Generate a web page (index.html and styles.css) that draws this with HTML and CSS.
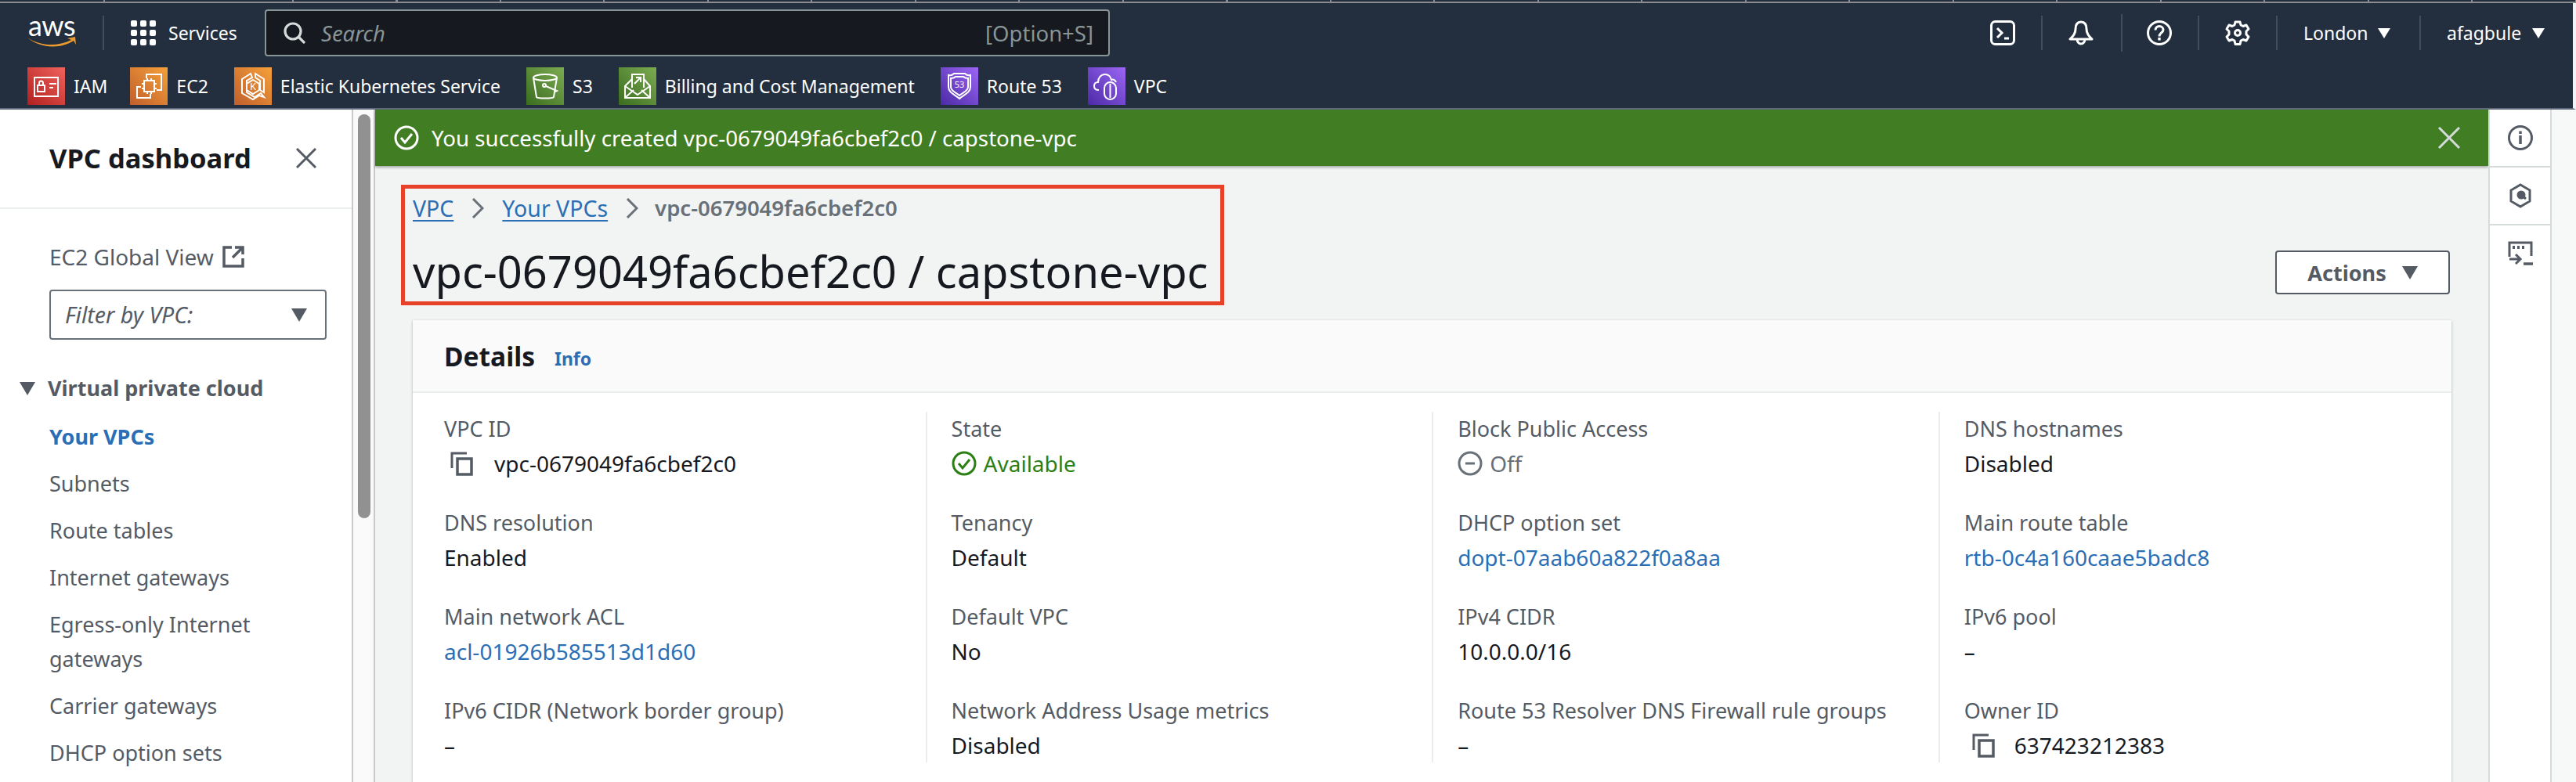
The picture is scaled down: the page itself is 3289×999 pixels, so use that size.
FILE: index.html
```html
<!DOCTYPE html>
<html lang="en">
<head>
  <meta charset="UTF-8">
  <title>vpc-0679049fa6cbef2c0 / capstone-vpc | VPC Console</title>
  <link rel="stylesheet" href="styles.css">
</head>
<body>
  <svg class="defs" width="0" height="0">
    <symbol id="copy" viewBox="0 0 32 32">
      <path d="M3 22V3h19" fill="none" stroke="currentColor" stroke-width="3"/>
      <rect x="10" y="10" width="18" height="20" fill="none" stroke="currentColor" stroke-width="3.5"/>
    </symbol>
  </svg>

  <div class="strip"><div class="strip-ticks"></div></div>
  <header class="header">
    <div class="nav-top">
      <div class="logo">
        <span class="logo-text">aws</span>
        <svg class="logo-smile" width="64" height="15" viewBox="0 0 64 15"><path d="M0 2c16 11 38 12 56 3l-5-2 10-2 1 10-3-5C42 17 16 16 0 2z" fill="#ec9a2e"/></svg>
      </div>
      <div class="services">
        <svg width="32" height="32" viewBox="0 0 32 32" fill="#fff">
          <rect width="8" height="8" rx="2"/><rect x="12" width="8" height="8" rx="2"/><rect x="24" width="8" height="8" rx="2"/>
          <rect y="12" width="8" height="8" rx="2"/><rect x="12" y="12" width="8" height="8" rx="2"/><rect x="24" y="12" width="8" height="8" rx="2"/>
          <rect y="24" width="8" height="8" rx="2"/><rect x="12" y="24" width="8" height="8" rx="2"/><rect x="24" y="24" width="8" height="8" rx="2"/>
        </svg>
        <span>Services</span>
      </div>
      <div class="search">
        <svg width="28" height="28" viewBox="0 0 28 28" fill="none" stroke="#d5dbdb" stroke-width="3.2"><circle cx="12" cy="12" r="10"/><path d="M19 19l8 8"/></svg>
        <span class="search-text">Search</span>
        <span class="search-key">[Option+S]</span>
      </div>
      <div class="nav-right">
        <div class="nav-cell nav-first">
          <svg width="32" height="32" viewBox="0 0 32 32" fill="none" stroke="#fff" stroke-width="3"><rect x="1.5" y="1.5" width="29" height="29" rx="5"/><path d="M9 10l6 6-6 6"/><path d="M18 23h6"/></svg>
        </div>
        <div class="nav-cell nav-bell">
          <svg width="32" height="32" viewBox="0 0 32 32" fill="none" stroke="#fff" stroke-width="3"><path d="M16 2c-5 0-7 4-7 9 0 6-3 9-7 13h28c-4-4-7-7-7-13 0-5-2-9-7-9z" stroke-linejoin="round"/><path d="M11 24a5 6 0 0 0 10 0"/></svg>
        </div>
        <div class="nav-cell nav-narrow">
          <svg width="32" height="32" viewBox="0 0 32 32" fill="none" stroke="#fff" stroke-width="3"><circle cx="16" cy="16" r="14.5"/><path d="M11 12.5c0-3 2.300-5 5-5s5 2 5 4.500c0 4-5 4-5 8.500"/><path d="M16 22v3.500" stroke-width="3.400"/></svg>
        </div>
        <div class="nav-cell">
          <svg width="32" height="32" viewBox="0 0 32 32" fill="none" stroke="#fff" stroke-width="3" stroke-linejoin="round"><path d="M13 2h6l1 4 3 1.500 4-1.500 3 5-3 3v4l3 3-3 5-4-1.500-3 1.500-1 4.500h-6l-1-4.500-3-1.500-4 1.500-3-5 3-3v-4l-3-3 3-5 4 1.500 3-1.500z"/><circle cx="16" cy="16" r="3.500"/></svg>
        </div>
        <div class="nav-cell nav-text"><span class="nav-region">London</span><i class="caret caret-light"></i></div>
        <div class="nav-cell nav-text nav-last"><span class="nav-user">afagbule</span><i class="caret caret-light"></i></div>
      </div>
    </div>
    <div class="nav-shortcuts">
      <a class="shortcut shortcut-iam">
        <svg class="tile tile-red" viewBox="0 0 48 48" fill="none" stroke="#fff" stroke-width="2"><rect x="9" y="13" width="30" height="24"/><rect x="13" y="23" width="9" height="8"/><path d="M15 23v-3a2.500 2.500 0 0 1 5 0v3"/><path d="M28 21h9M28 26h5"/></svg>
        <span>IAM</span>
      </a>
      <a class="shortcut">
        <svg class="tile tile-orange" viewBox="0 0 48 48" fill="none" stroke="#fff" stroke-width="2"><path d="M21 14V9h19v20h-6M14 25H9v14h17v-5"/><rect x="18" y="17" width="13" height="14"/><path d="M15 21h3M15 27h3M31 21h3M31 27h3M22 14v3M27 14v3M22 31v3M27 31v3"/></svg>
        <span>EC2</span>
      </a>
      <a class="shortcut">
        <svg class="tile tile-orange" viewBox="0 0 48 48" fill="none" stroke="#fff" stroke-width="2"><path d="M21 8l-11 7v18l14 8 8-5 6 2-4-5-8 5-10-6V17l7-4z"/><path d="M27 8l11 7v17l-5-3V17l-6-4z"/><path d="M24 16l8 5v8l-8 5-8-5v-8z"/><text class="tile-glyph" x="24" y="29" text-anchor="middle">K</text></svg>
        <span>Elastic Kubernetes Service</span>
      </a>
      <a class="shortcut">
        <svg class="tile tile-green" viewBox="0 0 48 48" fill="none" stroke="#fff" stroke-width="2"><ellipse cx="24" cy="13" rx="15" ry="4"/><path d="M9 13l4 25c1 2 21 2 22 0l4-25"/><circle cx="23" cy="23" r="2"/><path d="M25 24l14 6-2 1"/></svg>
        <span>S3</span>
      </a>
      <a class="shortcut">
        <svg class="tile tile-green" viewBox="0 0 48 48" fill="none" stroke="#fff" stroke-width="2"><path d="M17 26V9h15v17"/><path d="M20 21l8-8M22 13h6v6"/><path d="M17 15l-9 9v15h32V24l-8-9"/><path d="M8 24l16 11 16-11M8 39l11-10M40 39L29 29"/></svg>
        <span>Billing and Cost Management</span>
      </a>
      <a class="shortcut">
        <svg class="tile tile-purple" viewBox="0 0 48 48" fill="none" stroke="#fff" stroke-width="2"><path d="M10 10c3 1 5 0 7-2h14c2 2 4 3 7 2v15c0 8-9 10-14 15-5-5-14-7-14-15z"/><path d="M13 14c2 0 4 0 6-2h10c2 2 4 2 6 2v11c0 6-7 7-11 11-4-4-11-5-11-11z"/><text class="tile-glyph tile-glyph-sm" x="24" y="26" text-anchor="middle">53</text></svg>
        <span>Route 53</span>
      </a>
      <a class="shortcut">
        <svg class="tile tile-purple" viewBox="0 0 48 48" fill="none" stroke="#fff" stroke-width="2"><path d="M14 29c-4 0-6-2-6-5s2-5 5-5c0-6 4-10 9-10 4 0 7 3 8 7 2-1 5 0 6 3"/><rect x="21" y="19" width="15" height="22" rx="7.500"/><path d="M28.500 21v18"/></svg>
        <span>VPC</span>
      </a>
    </div>
  </header>

  <div class="app">
    <aside class="sidebar">
      <div class="side-head">
        <h2>VPC dashboard</h2>
        <svg width="26" height="26" viewBox="0 0 26 26" stroke="#545b64" stroke-width="3"><path d="M1 1l24 24M25 1L1 25"/></svg>
      </div>
      <div class="side-body">
        <div class="global-view">
          <span>EC2 Global View</span>
          <svg width="28" height="28" viewBox="0 0 28 28" fill="none" stroke="#545b64" stroke-width="3.500"><path d="M12 2H2v24h24V16"/><path d="M13 15L25 3M16 2h10v9"/></svg>
        </div>
        <div class="filter">
          <span>Filter by VPC:</span>
          <i class="caret caret-dark"></i>
        </div>
        <div class="side-section">
          <i class="caret caret-dark"></i>
          <span>Virtual private cloud</span>
        </div>
        <ul class="side-list">
          <li class="active">Your VPCs</li>
          <li>Subnets</li>
          <li>Route tables</li>
          <li>Internet gateways</li>
          <li>Egress-only Internet gateways</li>
          <li>Carrier gateways</li>
          <li>DHCP option sets</li>
        </ul>
      </div>
    </aside>
    <div class="scrollbar"><div class="scrollbar-thumb"></div></div>

    <main class="main">
      <div class="flash">
        <svg width="32" height="32" viewBox="0 0 32 32" fill="none" stroke="#fff" stroke-width="3"><circle cx="16" cy="16" r="14"/><path d="M9 16l5 6 9-11"/></svg>
        <span class="flash-text">You successfully created vpc-0679049fa6cbef2c0 / capstone-vpc</span>
        <svg class="flash-close" width="28" height="28" viewBox="0 0 28 28" stroke="#d5dbdb" stroke-width="3"><path d="M1 1l26 26M27 1L1 27"/></svg>
      </div>

      <div class="page-head">
        <div class="marked">
          <nav class="crumbs">
            <a href="#">VPC</a>
            <svg width="16" height="26" viewBox="0 0 16 26" fill="none" stroke="#687078" stroke-width="3"><path d="M2 1l12 12L2 25"/></svg>
            <a href="#">Your VPCs</a>
            <svg width="16" height="26" viewBox="0 0 16 26" fill="none" stroke="#687078" stroke-width="3"><path d="M2 1l12 12L2 25"/></svg>
            <span class="crumb-current">vpc-0679049fa6cbef2c0</span>
          </nav>
          <h1>vpc-0679049fa6cbef2c0 / capstone-vpc</h1>
        </div>
        <button class="actions">Actions<i class="caret caret-dark"></i></button>
      </div>

      <section class="card">
        <div class="card-head">
          <h2>Details</h2>
          <a href="#">Info</a>
        </div>
        <div class="card-body">
          <div class="col">
            <div class="field">
              <div class="label">VPC ID</div>
              <div class="value value-copy"><svg class="copy-icon"><use href="#copy"/></svg>vpc-0679049fa6cbef2c0</div>
            </div>
            <div class="field">
              <div class="label">DNS resolution</div>
              <div class="value">Enabled</div>
            </div>
            <div class="field">
              <div class="label">Main network ACL</div>
              <div class="value"><a href="#">acl-01926b585513d1d60</a></div>
            </div>
            <div class="field">
              <div class="label">IPv6 CIDR (Network border group)</div>
              <div class="value">–</div>
            </div>
          </div>
          <div class="col">
            <div class="field">
              <div class="label">State</div>
              <div class="value value-ok">
                <svg width="32" height="32" viewBox="0 0 32 32" fill="none" stroke="currentColor" stroke-width="3"><circle cx="16" cy="16" r="14"/><path d="M9 16l5 6 9-11"/></svg>
                Available
              </div>
            </div>
            <div class="field">
              <div class="label">Tenancy</div>
              <div class="value">Default</div>
            </div>
            <div class="field">
              <div class="label">Default VPC</div>
              <div class="value">No</div>
            </div>
            <div class="field">
              <div class="label">Network Address Usage metrics</div>
              <div class="value">Disabled</div>
            </div>
          </div>
          <div class="col">
            <div class="field">
              <div class="label">Block Public Access</div>
              <div class="value value-off">
                <svg width="32" height="32" viewBox="0 0 32 32" fill="none" stroke="currentColor" stroke-width="3"><circle cx="16" cy="16" r="14"/><path d="M10 16h12"/></svg>
                Off
              </div>
            </div>
            <div class="field">
              <div class="label">DHCP option set</div>
              <div class="value"><a href="#">dopt-07aab60a822f0a8aa</a></div>
            </div>
            <div class="field">
              <div class="label">IPv4 CIDR</div>
              <div class="value">10.0.0.0/16</div>
            </div>
            <div class="field">
              <div class="label">Route 53 Resolver DNS Firewall rule groups</div>
              <div class="value">–</div>
            </div>
          </div>
          <div class="col">
            <div class="field">
              <div class="label">DNS hostnames</div>
              <div class="value">Disabled</div>
            </div>
            <div class="field">
              <div class="label">Main route table</div>
              <div class="value"><a href="#">rtb-0c4a160caae5badc8</a></div>
            </div>
            <div class="field">
              <div class="label">IPv6 pool</div>
              <div class="value">–</div>
            </div>
            <div class="field">
              <div class="label">Owner ID</div>
              <div class="value value-copy value-copy-tight"><svg class="copy-icon"><use href="#copy"/></svg>637423212383</div>
            </div>
          </div>
        </div>
      </section>
    </main>

    <aside class="rail">
      <div class="rail-item">
        <svg width="32" height="32" viewBox="0 0 32 32" fill="none" stroke="#545b64" stroke-width="3"><circle cx="16" cy="16" r="14.500"/><path d="M16 13v11" stroke-width="3.500"/><path d="M16 7.500v3.500" stroke-width="3.500"/></svg>
      </div>
      <div class="rail-item">
        <svg width="28" height="32" viewBox="0 0 28 32" fill="none" stroke="#545b64" stroke-width="3"><path d="M14 2l12 7v14l-12 7-12-7V9z"/><circle cx="15" cy="15" r="4" fill="#545b64"/><path d="M15 15l6 5"/></svg>
      </div>
      <div class="rail-item">
        <svg width="32" height="32" viewBox="0 0 32 32" fill="none" stroke="#545b64" stroke-width="3"><path d="M30 19V2H2v18"/><path d="M6 8h3M12 8h3M18 8h3" stroke-width="4"/><path d="M2 23h13M10 17l6 6-6 6"/><path d="M20 29h12" stroke-width="3.500"/></svg>
      </div>
    </aside>
  </div>
</body>
</html>
```
FILE: styles.css
```css
* {
  box-sizing: border-box;
}
html, body {
  margin: 0;
  height: 100%;
  overflow: hidden;
}
body {
  font-family: "Noto Sans", "Open Sans", sans-serif;
  background: #f2f3f3;
  color: #16191f;
}
a {
  color: #2a6eb5;
  text-decoration: none;
}
h1, h2, ul {
  margin: 0;
  padding: 0;
}
.defs {
  display: block;
  height: 0;
}

/* screen capture edge above the console */
.strip {
  height: 4px;
  background: #232f3e linear-gradient(#8a8d8f, #8a8d8f) 132px 0 / 2px 2px no-repeat;
  border-bottom: 2px solid #8a8d8f;
}
.strip-ticks {
  height: 2px;
  margin-left: 373px;
  background: repeating-linear-gradient(90deg, #8a8d8f 0 2px, transparent 2px 132.5px);
}

/* top nav */
.header {
  background: #232f3e;
  color: #fff;
  height: 136px;
  border-bottom: 2px solid #5f6b7a;
  border-right: 4px solid #f2f3f3;
}
.nav-top {
  display: flex;
  align-items: center;
  height: 76px;
  padding-left: 35px;
}
.logo {
  display: flex;
  flex-direction: column;
  width: 98px;
  height: 44px;
  border-right: 2px solid #414d5c;
}
.logo-text {
  font-family: "Lato", sans-serif;
  font-size: 36px;
  line-height: 24px;
  letter-spacing: -0.5px;
  padding-left: 1px;
}
.logo-smile {
  margin-top: 2px;
}
.services {
  display: flex;
  align-items: center;
  gap: 16px;
  margin-left: 34px;
  font-size: 23px;
  width: 171px;
}
.search {
  display: flex;
  align-items: center;
  width: 1079px;
  height: 60px;
  padding: 0 19px 0 22px;
  background: #16191f;
  border: 2px solid #879596;
  border-radius: 4px;
  font-size: 27.5px;
  color: #879596;
}
.search-text {
  margin-left: 20px;
  font-style: italic;
}
.search-key {
  margin-left: auto;
}
.nav-right {
  display: flex;
  align-items: center;
  margin-left: auto;
  padding-right: 36px;
}
.nav-cell {
  display: flex;
  align-items: center;
  height: 44px;
  padding: 0 33px;
  border-left: 2px solid #414d5c;
}
.nav-first {
  padding-left: 0;
  border-left: 0;
}
.nav-bell {
  padding-right: 35px;
}
.nav-narrow {
  height: 48px;
  padding-left: 31px;
}
.nav-text {
  gap: 12px;
  font-size: 23px;
  padding-right: 37px;
}
.nav-region {
  width: 83px;
}
.nav-user {
  width: 96px;
  margin-right: 1px;
}
.nav-last {
  padding-right: 0;
}
.nav-shortcuts {
  display: flex;
  padding: 6px 0 0 35px;
  gap: 33px;
}
.shortcut {
  display: flex;
  align-items: center;
  gap: 11px;
  font-size: 23px;
  color: #fff;
}
.shortcut-iam {
  margin-right: -4px;
}
.tile {
  width: 48px;
  height: 48px;
  flex: none;
}
.tile-red {
  background: linear-gradient(45deg, #b0201f, #f0625c);
}
.tile-orange {
  background: linear-gradient(45deg, #c05f2c, #f5a03a);
}
.tile-green {
  background: linear-gradient(45deg, #3b6d20, #7cab50);
}
.tile-purple {
  background: linear-gradient(45deg, #4b2aa5, #9c66f5);
}
.tile-glyph {
  fill: #fff;
  stroke: none;
  font-size: 13px;
}
.tile-glyph-sm {
  font-size: 11px;
}

/* carets */
.caret {
  display: inline-block;
  width: 0;
  height: 0;
  border-style: solid;
  border-color: transparent;
  border-width: 17px 10px 0;
  border-top-color: #545b64;
}
.caret-light {
  border-width: 13px 8px 0;
  border-top-color: #fff;
}

/* layout */
.app {
  display: flex;
  height: 859px;
}
.sidebar {
  width: 451px;
  flex: none;
  background: #fff;
  border-right: 2px solid #c9c9c9;
}
.side-head {
  display: flex;
  align-items: center;
  justify-content: space-between;
  height: 127px;
  padding: 0 45px 2px 63px;
  border-bottom: 2px solid #eaeded;
}
.side-head h2 {
  font-size: 34.5px;
  font-weight: 700;
  line-height: 44px;
}
.side-body {
  padding: 39px 0 0 63px;
  font-size: 27px;
  line-height: 44px;
  color: #545b64;
}
.global-view {
  display: flex;
  align-items: center;
  gap: 11px;
  font-size: 28px;
}
.filter {
  display: flex;
  align-items: center;
  justify-content: space-between;
  width: 354px;
  height: 64px;
  margin-top: 20px;
  padding: 0 23px 0 18px;
  border: 2px solid #687078;
  border-radius: 4px;
  font-size: 28.5px;
  font-style: italic;
}
.side-section {
  display: flex;
  align-items: center;
  gap: 16px;
  margin: 40px 0 18px -38px;
  font-weight: 700;
}
.side-list {
  list-style: none;
  padding-right: 45px;
}
.side-list li {
  margin-bottom: 16px;
}
.side-list .active {
  color: #2a6eb5;
  font-weight: 700;
}
.scrollbar {
  width: 28px;
  flex: none;
  padding: 6px 4px 0 6px;
  background: #fafafa;
  border-right: 2px solid #c9c9c9;
}
.scrollbar-thumb {
  height: 516px;
  border-radius: 8px;
  background: #919191;
}

.main {
  flex: 1;
  min-width: 0;
}
.flash {
  display: flex;
  align-items: center;
  height: 72px;
  padding: 0 36px 0 24px;
  background: #417e23;
  box-shadow: 0 2px 3px rgba(0, 0, 0, 0.3);
  color: #fff;
  font-size: 27.7px;
}
.flash-text {
  margin-left: 16px;
}
.flash-close {
  margin-left: auto;
}
.page-head {
  display: flex;
  align-items: flex-end;
  justify-content: space-between;
  margin: 24px 49px 0 33px;
}
.marked {
  width: 1051px;
  height: 154px;
  padding: 3px 0 0 10px;
  border: 5px solid #e8412a;
}
.crumbs {
  display: flex;
  align-items: center;
  gap: 23px;
  font-size: 28.5px;
  line-height: 44px;
  color: #687078;
}
.crumbs a {
  text-decoration: underline;
  text-underline-offset: 4px;
}
.crumb-current {
  font-size: 27.5px;
  font-weight: 600;
  margin-left: -2px;
}
.marked h1 {
  margin-top: 26px;
  font-size: 56px;
  font-weight: 400;
  line-height: 64px;
  white-space: nowrap;
}
.actions {
  display: flex;
  align-items: center;
  justify-content: center;
  gap: 20px;
  width: 223px;
  height: 56px;
  margin-bottom: 14px;
  background: #fff;
  border: 2px solid #545b64;
  border-radius: 4px;
  color: #545b64;
  font: 700 27px "Noto Sans", sans-serif;
}
.card {
  margin: 19px 47px 0 48px;
  background: #fff;
  box-shadow: 0 1px 3px rgba(0, 21, 41, 0.3);
}
.card-head {
  display: flex;
  align-items: center;
  gap: 25px;
  height: 93px;
  padding: 0 0 0 40px;
  background: #fafafa;
  border-bottom: 2px solid #eaeded;
}
.card-head h2 {
  font-size: 33.5px;
  font-weight: 700;
}
.card-head a {
  font-size: 23px;
  font-weight: 700;
  padding-top: 6px;
}
.card-body {
  display: grid;
  grid-template-columns: repeat(4, 646.6px);
  padding: 24px 0 30px 8px;
}
.col {
  padding-left: 31px;
  border-left: 2px solid #eaeded;
}
.col:first-child {
  padding-left: 32px;
  border-left: 0;
}
.field {
  height: 120px;
  line-height: 44px;
}
.field:last-child {
  height: 88px;
}
.label {
  font-size: 27px;
  color: #545b64;
}
.value {
  display: flex;
  align-items: center;
  gap: 9px;
  font-size: 28px;
}
.value-copy {
  padding-left: 7px;
  gap: 25px;
}
.value-copy-tight {
  padding-left: 9px;
  gap: 23px;
}
.copy-icon {
  width: 32px;
  height: 32px;
  color: #545b64;
}
.value-ok {
  color: #2b7f14;
}
.value-off {
  color: #687078;
}
.rail {
  width: 81px;
  flex: none;
  background: #fff;
  border-left: 2px solid #d5dbdb;
  border-right: 2px solid #d5dbdb;
}
.rail-item {
  display: flex;
  align-items: center;
  justify-content: center;
  height: 74px;
  border-bottom: 2px solid #d5dbdb;
}
.rail-item:last-child {
  border-bottom-color: transparent;
}
.app::after {
  content: "";
  width: 31px;
  flex: none;
  background: #f7f8f8;
}
```
